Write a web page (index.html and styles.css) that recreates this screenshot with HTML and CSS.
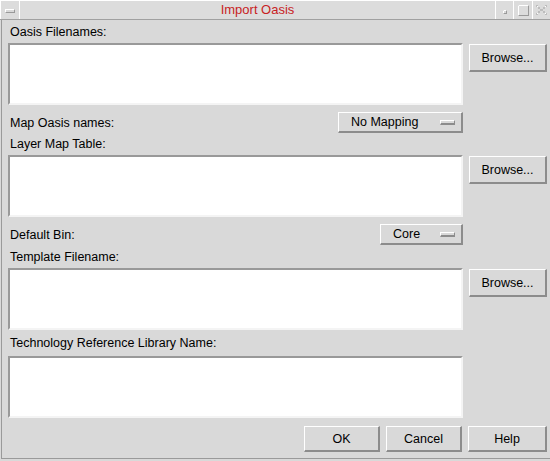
FILE: index.html
```html
<!DOCTYPE html>
<html>
<head>
<meta charset="utf-8">
<title>Import Oasis</title>
<link rel="stylesheet" href="styles.css">
</head>
<body>
<div class="window">
  <div class="titlebar">
    <div class="tb-menu"><span class="tb-menu-bar"></span></div>
    <div class="tb-title">Import Oasis</div>
    <div class="tb-btn">
      <svg width="17" height="19" viewBox="0 0 17 19"><rect x="7.5" y="9.5" width="3" height="3" fill="#d9d9d9" stroke="#9a9a9a"/><path d="M7.5 12.5V9.5H10.5" fill="none" stroke="#fff"/></svg>
    </div>
    <div class="tb-btn">
      <svg width="18" height="19" viewBox="0 0 18 19"><rect x="4.5" y="4.5" width="10" height="10" fill="none" stroke="#9a9a9a"/><path d="M4.5 14.5V4.5H14.5" fill="none" stroke="#fff"/></svg>
    </div>
    <div class="tb-btn tb-last">
      <svg width="17" height="19" viewBox="0 0 17 19"><g fill="#bdbdbd"><rect x="3" y="4" width="2" height="2"/><rect x="12" y="4" width="2" height="2"/><rect x="5" y="6" width="2" height="2"/><rect x="10" y="6" width="2" height="2"/><rect x="7" y="8" width="3" height="2"/><rect x="5" y="10" width="2" height="2"/><rect x="10" y="10" width="2" height="2"/><rect x="3" y="12" width="2" height="2"/><rect x="12" y="12" width="2" height="2"/></g><g fill="#fff"><rect x="4" y="5" width="1" height="1"/><rect x="12" y="5" width="1" height="1"/><rect x="4" y="12" width="1" height="1"/><rect x="12" y="12" width="1" height="1"/></g></svg>
    </div>
  </div>
  <div class="frame">
    <div class="row label-row h23"><span>Oasis Filenames:</span></div>
    <div class="row field-row">
      <div class="textbox"></div>
      <div class="side"><button class="btn browse">Browse...</button></div>
    </div>
    <div class="row option-row">
      <div class="option-cell">
        <span>Map Oasis names:</span>
        <div class="menubtn w125"><span>No Mapping</span><span class="ind"></span></div>
      </div>
    </div>
    <div class="row label-row h22"><span>Layer Map Table:</span></div>
    <div class="row field-row">
      <div class="textbox"></div>
      <div class="side"><button class="btn browse">Browse...</button></div>
    </div>
    <div class="row option-row">
      <div class="option-cell">
        <span>Default Bin:</span>
        <div class="menubtn w83"><span>Core</span><span class="ind"></span></div>
      </div>
    </div>
    <div class="row label-row h23"><span>Template Filename:</span></div>
    <div class="row field-row">
      <div class="textbox"></div>
      <div class="side"><button class="btn browse">Browse...</button></div>
    </div>
    <div class="row label-row h26"><span>Technology Reference Library Name:</span></div>
    <div class="row field-row">
      <div class="textbox"></div>
    </div>
    <div class="actions">
      <button class="btn action">OK</button>
      <button class="btn action">Cancel</button>
      <button class="btn action help">Help</button>
    </div>
  </div>
</div>
</body>
</html>
```
FILE: styles.css
```css
* { box-sizing: border-box; }
html, body {
  margin: 0;
  padding: 0;
  width: 550px;
  height: 461px;
  overflow: hidden;
  background: #d9d9d9;
  font-family: "Liberation Sans", Arial, sans-serif;
  font-size: 12.5px;
  color: #000;
}
.window {
  width: 550px;
  height: 461px;
  display: flex;
  flex-direction: column;
}
.titlebar {
  height: 20px;
  display: flex;
  background: #dcdcdc;
  border-top: 1px solid #fff;
  border-bottom: 1px solid #a0a0a0;
}
.tb-menu {
  width: 20px;
  border-left: 1px solid #fff;
  border-right: 1px solid #fff;
  display: flex;
  align-items: center;
  justify-content: center;
}
.tb-menu-bar {
  width: 10px;
  height: 4px;
  background: #d9d9d9;
  border-top: 1px solid #fff;
  border-left: 1px solid #fff;
  border-bottom: 1px solid #999;
  border-right: 1px solid #999;
  margin-top: 1px;
}
.tb-title {
  flex: 1;
  text-align: center;
  color: #c81e24;
  font-size: 13px;
  line-height: 18px;
}
.tb-btn {
  border-left: 1px solid #fff;
  display: flex;
  height: 18px;
}
.tb-btn svg { display: block; }
.tb-last { width: 18px; }
.frame {
  height: 439px;
  margin-left: 1px;
  border-left: 1px solid #9a9a9a;
  border-bottom: 1px solid #9a9a9a;
  padding-left: 6px;
  display: flex;
  flex-direction: column;
}
.row {
  display: grid;
  grid-template-columns: 455px 78px;
  column-gap: 6px;
}
.label-row {
  align-items: center;
}
.label-row span { line-height: 14px; padding-left: 2px; }
.h22 { height: 22px; }
.h23 { height: 23px; }
.h26 { height: 26px; }
.field-row { height: 62px; }
.textbox {
  height: 62px;
  background: #fff;
  border-top: 2px solid #999;
  border-left: 2px solid #999;
  border-bottom: 2px solid #f4f4f4;
  border-right: 2px solid #f4f4f4;
}
.side { display: flex; flex-direction: column; }
.btn {
  font-family: "Liberation Sans", Arial, sans-serif;
  font-size: 12.5px;
  color: #000;
  background: #d9d9d9;
  border-style: solid;
  border-width: 1px 2px 2px 1px;
  border-color: #fff #8c8c8c #8c8c8c #fff;
  padding: 0;
  margin: 0;
  text-align: center;
}
.browse { height: 28px; width: 78px; margin-top: 1px; }
.option-row { margin-top: 7px; height: 21px; }
.option-cell {
  display: flex;
  align-items: center;
  justify-content: space-between;
}
.option-cell > span { padding-left: 2px; }
.menubtn {
  height: 21px;
  display: flex;
  align-items: center;
  justify-content: space-between;
  padding-left: 12px;
  padding-right: 6px;
  background: #d9d9d9;
  border-style: solid;
  border-width: 1px 2px 2px 1px;
  border-color: #fff #8c8c8c #8c8c8c #fff;
}
.w125 { width: 125px; }
.w83 { width: 83px; }
.ind {
  width: 15px;
  height: 5px;
  background: #d9d9d9;
  border-style: solid;
  border-width: 1px 1px 2px 1px;
  border-color: #fff #8c8c8c #8c8c8c #fff;
}
.actions {
  margin-top: 8px;
  display: flex;
  justify-content: flex-end;
  gap: 6px;
  width: 539px;
}
.action { width: 76px; height: 26px; }
.help { width: 79px; }
```
